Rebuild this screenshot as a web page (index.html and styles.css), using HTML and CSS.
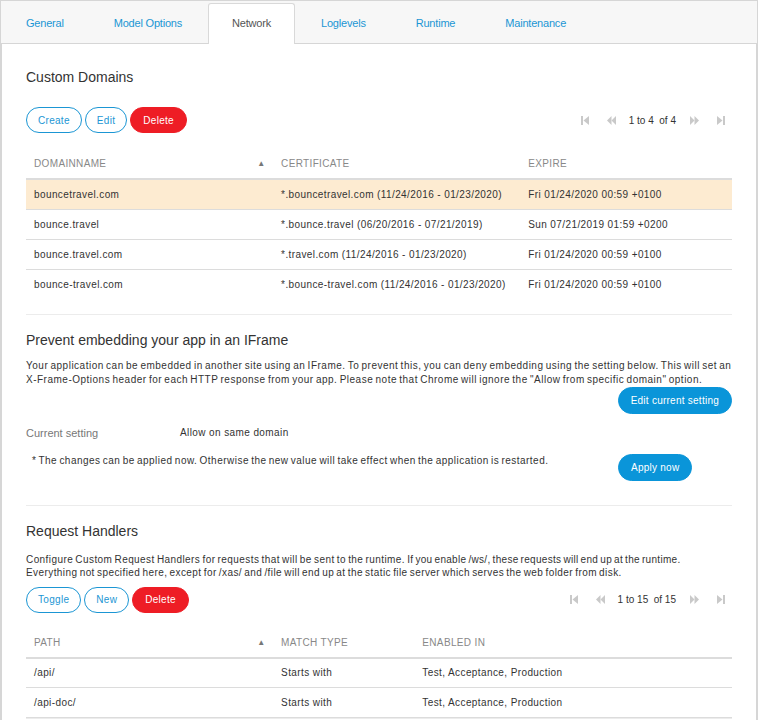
FILE: index.html
```html
<!DOCTYPE html>
<html>
<head>
<meta charset="utf-8">
<link rel="stylesheet" href="styles.css">
</head>
<body>
<div class="frame">
  <nav class="tabs">
    <a class="tab">General</a>
    <a class="tab">Model Options</a>
    <a class="tab active">Network</a>
    <a class="tab">Loglevels</a>
    <a class="tab">Runtime</a>
    <a class="tab">Maintenance</a>
  </nav>
  <main class="panel">
    <section class="section first">
      <h2 class="title">Custom Domains</h2>
      <div class="toolbar">
        <div class="btns">
          <button class="btn outline">Create</button>
          <button class="btn outline">Edit</button>
          <button class="btn danger">Delete</button>
        </div>
        <div class="pager">
          <svg class="pi" width="8" height="9" viewBox="0 0 8 9"><rect x="0" y="0" width="2" height="9"/><polygon points="8,0 2.5,4.5 8,9"/></svg>
          <svg class="pi" width="9" height="9" viewBox="0 0 9 9"><polygon points="4.5,0 0,4.5 4.5,9"/><polygon points="9,0 4.5,4.5 9,9"/></svg>
          <span class="ptext">1 to 4 &nbsp;of 4</span>
          <svg class="pi" width="9" height="9" viewBox="0 0 9 9"><polygon points="0,0 4.5,4.5 0,9"/><polygon points="4.5,0 9,4.5 4.5,9"/></svg>
          <svg class="pi" width="8" height="9" viewBox="0 0 8 9"><polygon points="0,0 5.5,4.5 0,9"/><rect x="6" y="0" width="2" height="9"/></svg>
        </div>
      </div>
      <table class="grid">
        <colgroup><col class="c35"><col class="c35"><col></colgroup>
        <thead>
          <tr><th><div class="sorth"><span>Domainname</span><span class="sort">▲</span></div></th><th>Certificate</th><th>Expire</th></tr>
        </thead>
        <tbody>
          <tr class="sel"><td>bouncetravel.com</td><td>*.bouncetravel.com (11/24/2016 - 01/23/2020)</td><td>Fri 01/24/2020 00:59 +0100</td></tr>
          <tr><td>bounce.travel</td><td>*.bounce.travel (06/20/2016 - 07/21/2019)</td><td>Sun 07/21/2019 01:59 +0200</td></tr>
          <tr><td>bounce.travel.com</td><td>*.travel.com (11/24/2016 - 01/23/2020)</td><td>Fri 01/24/2020 00:59 +0100</td></tr>
          <tr class="last"><td>bounce-travel.com</td><td>*.bounce-travel.com (11/24/2016 - 01/23/2020)</td><td>Fri 01/24/2020 00:59 +0100</td></tr>
        </tbody>
      </table>
    </section>

    <section class="section">
      <h2 class="title">Prevent embedding your app in an IFrame</h2>
      <p class="desc">Your application can be embedded in another site using an IFrame. To prevent this, you can deny embedding using the setting below. This will set an X-Frame-Options header for each HTTP response from your app. Please note that Chrome will ignore the "Allow from specific domain" option.</p>
      <div class="right"><button class="btn primary">Edit current setting</button></div>
      <div class="setting"><span class="label">Current setting</span><span class="value">Allow on same domain</span></div>
      <div class="apply">
        <span class="note">* The changes can be applied now. Otherwise the new value will take effect when the application is restarted.</span>
        <div class="applycol"><button class="btn primary">Apply now</button></div>
      </div>
    </section>

    <section class="section">
      <h2 class="title">Request Handlers</h2>
      <p class="desc tight">Configure Custom Request Handlers for requests that will be sent to the runtime. <span class="snug">If you enable /ws/, these requests will end up at the runtime.</span><br>Everything not specified here, except for /xas/ and /file will end up at the static file server which serves the web folder from disk.</p>
      <div class="toolbar">
        <div class="btns">
          <button class="btn outline">Toggle</button>
          <button class="btn outline">New</button>
          <button class="btn danger">Delete</button>
        </div>
        <div class="pager">
          <svg class="pi" width="8" height="9" viewBox="0 0 8 9"><rect x="0" y="0" width="2" height="9"/><polygon points="8,0 2.5,4.5 8,9"/></svg>
          <svg class="pi" width="9" height="9" viewBox="0 0 9 9"><polygon points="4.5,0 0,4.5 4.5,9"/><polygon points="9,0 4.5,4.5 9,9"/></svg>
          <span class="ptext">1 to 15 &nbsp;of 15</span>
          <svg class="pi" width="9" height="9" viewBox="0 0 9 9"><polygon points="0,0 4.5,4.5 0,9"/><polygon points="4.5,0 9,4.5 4.5,9"/></svg>
          <svg class="pi" width="8" height="9" viewBox="0 0 8 9"><polygon points="0,0 5.5,4.5 0,9"/><rect x="6" y="0" width="2" height="9"/></svg>
        </div>
      </div>
      <table class="grid second">
        <colgroup><col class="c35"><col class="c20"><col></colgroup>
        <thead>
          <tr><th><div class="sorth"><span>Path</span><span class="sort">▲</span></div></th><th>Match Type</th><th>Enabled In</th></tr>
        </thead>
        <tbody>
          <tr><td>/api/</td><td>Starts with</td><td>Test, Acceptance, Production</td></tr>
          <tr><td>/api-doc/</td><td>Starts with</td><td>Test, Acceptance, Production</td></tr>
        </tbody>
      </table>
    </section>
  </main>
</div>
</body>
</html>
```
FILE: styles.css
```css
* { box-sizing: border-box; }
html, body { margin: 0; padding: 0; background: #fff; }
body {
  font-family: "Liberation Sans", Arial, sans-serif;
  color: #333;
  height: 720px;
  overflow: hidden;
}
.frame {
  border: 1px solid #d6d6d6;
  border-bottom: none;
  background: #f7f7f7;
  min-height: 720px;
}
.tabs {
  display: flex;
  height: 43px;
  border-bottom: 1px solid #d6d6d6;
  padding-left: 1px;
  gap: 2px;
  align-items: flex-end;
}
.tab {
  font-size: 11px;
  letter-spacing: -0.2px;
  color: #1b96d4;
  height: 41px;
  line-height: 38px;
  padding: 0 23px;
  margin-bottom: -1px;
  border: 1px solid transparent;
  border-bottom: none;
  border-radius: 3px 3px 0 0;
}
.tab.active {
  background: #fff;
  border-color: #d9d9d9;
  color: #555;
}
.panel {
  background: #fff;
  border-left: 1px solid #d6d6d6;
  border-right: 1px solid #d6d6d6;
  padding: 0 24px;
  min-height: 676px;
}
.section {
  padding-top: 16px;
  border-bottom: 1px solid #ececec;
}
.section.first { padding-top: 24px; padding-bottom: 14px; }
.title {
  margin: 0;
  font-size: 14px;
  font-weight: normal;
  line-height: 18px;
  color: #333;
}
.first .title { margin-bottom: 21px; }
.toolbar {
  display: flex;
  justify-content: space-between;
  align-items: center;
}
.btns { display: flex; gap: 3px; }
.btn {
  font-family: "Liberation Sans", Arial, sans-serif;
  font-size: 10px;
  font-weight: normal;
  letter-spacing: 0.3px;
  height: 26px;
  border-radius: 13px;
  padding: 0 11px;
  border: 1px solid #1b96d4;
  background: #fff;
  color: #1b96d4;
  cursor: pointer;
}
.btn.danger { background: #ee1d25; border-color: #ee1d25; color: #fff; padding: 0 12px; }
.btn.primary { background: #0a95d9; border-color: #0a95d9; color: #fff; padding: 0 12px; height: 27px; border-radius: 14px; letter-spacing: 0.25px; }
.pager {
  display: flex;
  align-items: center;
  padding-right: 7px;
  font-size: 10px;
  color: #333;
}
.pi { fill: #c9c9c9; }
.pager .pi:nth-child(1) { margin-right: 18px; }
.pager .pi:nth-child(2) { margin-right: 13px; }
.pager .pi:nth-child(4) { margin-left: 14px; margin-right: 18px; }
.ptext { letter-spacing: 0; }
.grid {
  width: 100%;
  border-collapse: collapse;
  table-layout: fixed;
  margin-top: 16px;
  font-size: 10px;
  letter-spacing: 0.4px;
}
.grid.second { margin-top: 15px; }
.c35 { width: 35%; }
.c20 { width: 20%; }
.grid th {
  text-align: left;
  font-weight: normal;
  text-transform: uppercase;
  color: #888;
  letter-spacing: 0.35px;
  height: 30px;
  padding: 0 8px;
  border-bottom: 2px solid #dcdcdc;
}
.sorth { display: flex; justify-content: space-between; align-items: center; }
.sort { font-size: 8px; color: #777; letter-spacing: 0; }
.grid td {
  height: 30px;
  padding: 0 8px;
  border-bottom: 1px solid #dcdcdc;
  white-space: nowrap;
  color: #333;
}
.grid tr.sel td { background: #fdebd1; }
.grid tr.last td { border-bottom-color: transparent; }
.desc {
  margin: 10px 0 0;
  font-size: 10px;
  line-height: 14px;
  letter-spacing: 0.5px;
  word-spacing: -1px;
  color: #333;
}
.desc.tight { margin: 13px 0 8px; line-height: 13px; letter-spacing: 0.42px; }
.snug { letter-spacing: 0.3px; }
.right { display: flex; justify-content: flex-end; }
.setting {
  display: flex;
  margin-top: 10px;
  line-height: 18px;
}
.label { width: 154px; color: #777; font-size: 11px; }
.value { letter-spacing: 0.4px; color: #333; font-size: 10px; }
.apply {
  display: flex;
  align-items: flex-start;
  margin-top: 12px;
  padding-bottom: 24px;
}
.note {
  flex: 1;
  padding-left: 6px;
  font-size: 10px;
  line-height: 14px;
  letter-spacing: 0.48px;
  word-spacing: -1px;
}
.applycol { width: 114px; }
```
